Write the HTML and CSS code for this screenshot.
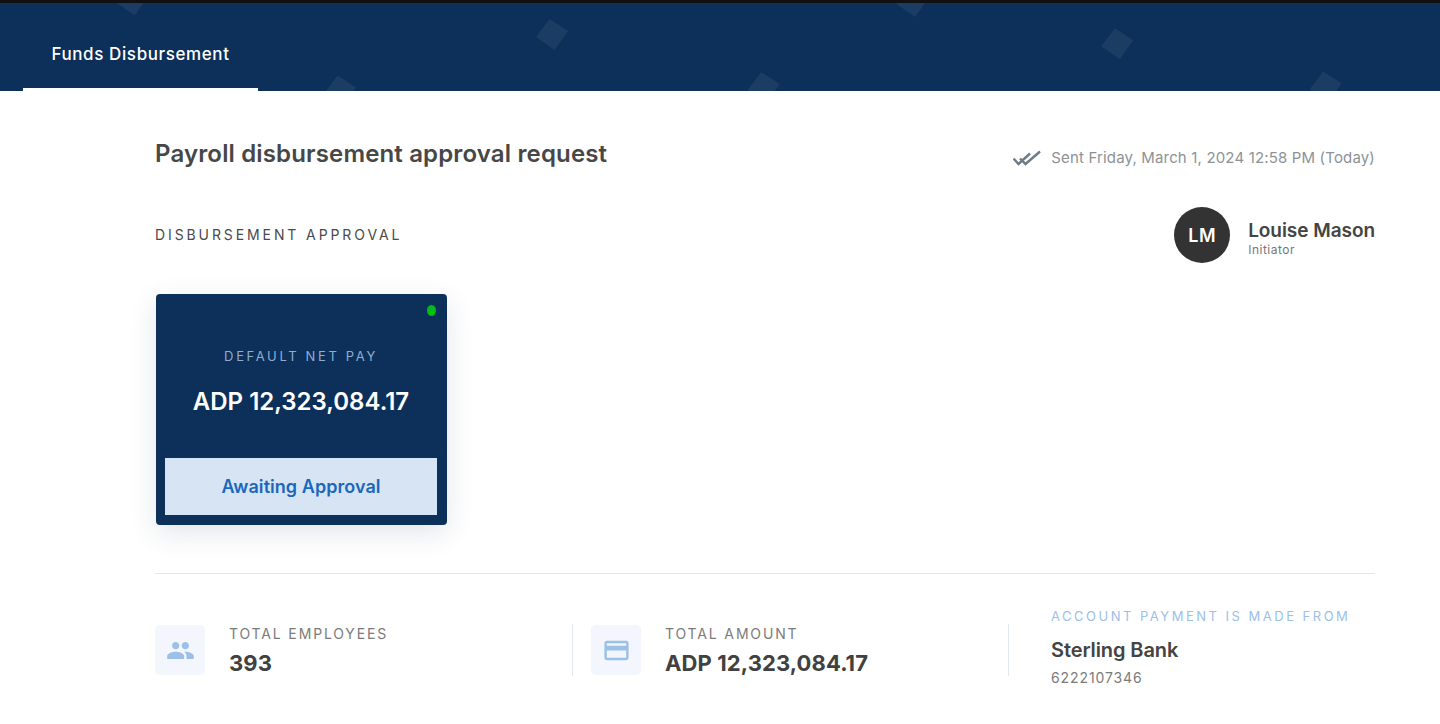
FILE: index.html
```html
<!DOCTYPE html>
<html lang="en">
<head>
<meta charset="utf-8">
<title>Funds Disbursement</title>
<link rel="stylesheet" href="styles.css">
</head>
<body>
<header class="banner">
  <svg class="confetti" width="1440" height="88" viewBox="0 0 1440 88" aria-hidden="true">
    <g fill="#1c3d63">
      <polygon points="129.600,-18.500 148,-6.500 134.600,12.500 116,-0.500"/>
      <polygon points="549.600,16 568,28 554.600,47 536,34"/>
      <polygon points="337.600,72.500 356,84.500 342.600,103.500 324,90.500"/>
      <polygon points="910.100,-17 928.500,-5 915.100,14 896.500,1"/>
      <polygon points="1114.900,25.300 1133.300,37.300 1119.900,56.300 1101.300,43.300"/>
      <polygon points="761.300,69 779.700,81 766.300,100 747.700,87"/>
      <polygon points="1323.200,68.500 1341.600,80.500 1328.200,99.500 1309.600,86.500"/>
    </g>
  </svg>
  <nav class="tabs"><a class="tab">Funds Disbursement</a></nav>
</header>
<main class="content">
  <div class="title-row">
    <h1 class="title">Payroll disbursement approval request</h1>
    <div class="sent">
      <svg class="sent-icon" width="28" height="16" viewBox="0 0 28 16" aria-hidden="true">
        <path d="M0.500 8.500 L5.500 14 L17 3.500 M7 8.500 L12.500 14 L27 1.500" fill="none" stroke="#6f7c85" stroke-width="2.400"/>
      </svg>
      <span>Sent Friday, March 1, 2024 12:58 PM (Today)</span>
    </div>
  </div>
  <div class="approval-row">
    <h2 class="section-label">DISBURSEMENT APPROVAL</h2>
    <div class="person">
      <div class="avatar">LM</div>
      <div class="person-text">
        <div class="person-name">Louise Mason</div>
        <div class="person-role">Initiator</div>
      </div>
    </div>
  </div>
  <section class="pay-card">
    <span class="status-dot"></span>
    <div class="pay-label">DEFAULT NET PAY</div>
    <div class="pay-amount">ADP 12,323,084.17</div>
    <div class="pay-status">Awaiting Approval</div>
  </section>
  <hr class="rule">
  <div class="stats">
    <div class="stat stat-first">
      <div class="stat-icon">
        <svg width="29" height="29" viewBox="0 0 24 24" aria-hidden="true"><path fill="#9cc0e7" d="M16 11c1.660 0 2.990-1.340 2.990-3S17.660 5 16 5s-3 1.340-3 3 1.340 3 3 3zm-8 0c1.660 0 2.990-1.340 2.990-3S9.660 5 8 5 5 6.340 5 8s1.340 3 3 3zm0 2c-2.330 0-7 1.170-7 3.500V19h14v-2.500c0-2.330-4.670-3.500-7-3.500zm8 0c-.290 0-.620.020-.970.050 1.160.840 1.970 1.970 1.970 3.450V19h6v-2.500c0-2.330-4.670-3.500-7-3.500z"/></svg>
      </div>
      <div>
        <div class="stat-label">TOTAL EMPLOYEES</div>
        <div class="stat-value">393</div>
      </div>
    </div>
    <div class="stat stat-second">
      <div class="stat-icon">
        <svg width="29" height="29" viewBox="0 0 24 24" aria-hidden="true"><path fill="#9cc0e7" d="M20 4H4c-1.110 0-1.990.890-1.990 2L2 18c0 1.110.890 2 2 2h16c1.110 0 2-.890 2-2V6c0-1.110-.890-2-2-2zm0 14H4v-6h16v6zm0-10H4V6h16v2z"/></svg>
      </div>
      <div>
        <div class="stat-label">TOTAL AMOUNT</div>
        <div class="stat-value">ADP 12,323,084.17</div>
      </div>
    </div>
    <div class="account">
      <div class="account-label">ACCOUNT PAYMENT IS MADE FROM</div>
      <div class="account-name">Sterling Bank</div>
      <div class="account-number">6222107346</div>
    </div>
  </div>
</main>
</body>
</html>
```
FILE: styles.css
```css
* { box-sizing: border-box; }
html, body { margin: 0; padding: 0; }
body {
  background: #fff;
  font-family: Inter, "Noto Sans", sans-serif;
  color: #3f3f3f;
  height: 724px;
  overflow: hidden;
}
.banner {
  position: relative;
  height: 91px;
  background: #0c3059;
  border-top: 3px solid #111;
  overflow: hidden;
}
.confetti { position: absolute; left: 0; top: 0; }
.tabs {
  position: relative;
  display: flex;
  height: 88px;
  padding-left: 23px;
}
.tab {
  display: flex;
  align-items: center;
  justify-content: center;
  width: 235px;
  height: 88px;
  padding-top: 16px;
  border-bottom: 3px solid #fff;
  color: #fff;
  font-size: 17px;
  letter-spacing: 0.6px;
  font-weight: 500;
}
.content { padding: 0 65px 0 155px; }
.title-row {
  display: flex;
  justify-content: space-between;
  align-items: flex-end;
  height: 78px;
}
.title {
  margin: 0;
  font-size: 24px;
  line-height: 30px;
  font-weight: 600;
  color: #474747;
  letter-spacing: 0.15px;
}
.sent {
  display: flex;
  align-items: center;
  gap: 10px;
  padding-bottom: 1px;
  font-size: 15px;
  letter-spacing: 0.16px;
  line-height: 20px;
  color: #8d9296;
}
.approval-row {
  display: flex;
  justify-content: space-between;
  align-items: flex-start;
  margin-top: 38px;
}
.section-label {
  margin: 18px 0 0;
  font-size: 14px;
  line-height: 20px;
  font-weight: 400;
  letter-spacing: 2.9px;
  color: #4a4a4a;
}
.person { display: flex; align-items: center; gap: 18px; }
.avatar {
  display: flex;
  align-items: center;
  justify-content: center;
  width: 56px;
  height: 56px;
  border-radius: 50%;
  background: #333;
  color: #fff;
  font-size: 18px;
  font-weight: 600;
  letter-spacing: 0.6px;
}
.person-text { margin-top: 5px; }
.person-name { font-size: 19px; letter-spacing: -0.05px; line-height: 24px; font-weight: 600; color: #444; }
.person-role { font-size: 12px; letter-spacing: 0.5px; line-height: 14px; color: #777; }
.pay-card {
  position: relative;
  display: flex;
  flex-direction: column;
  align-items: center;
  width: 291px;
  height: 231px;
  margin: 31px 0 0 1px;
  padding: 0 10px 10px 9px;
  background: #0c3059;
  border-radius: 4px;
  box-shadow: 0 8px 28px rgba(12, 48, 89, 0.12);
}
.status-dot {
  position: absolute;
  top: 11px;
  right: 11px;
  width: 9px;
  height: 11px;
  border-radius: 50%;
  background: #00bd13;
}
.pay-label {
  margin-top: 52px;
  font-size: 13px;
  line-height: 20px;
  letter-spacing: 2.65px;
  color: #8fadd0;
}
.pay-amount {
  margin-top: 21px;
  font-size: 24px;
  letter-spacing: 0;
  line-height: 30px;
  font-weight: 600;
  color: #fff;
}
.pay-status {
  display: flex;
  align-items: center;
  justify-content: center;
  width: 100%;
  height: 57px;
  margin-top: auto;
  background: #d6e4f4;
  color: #1a67bd;
  font-size: 18px;
  letter-spacing: 0.05px;
  font-weight: 600;
}
.rule {
  height: 1px;
  margin: 48px 0 0;
  border: 0;
  background: #e4e7ea;
}
.stats {
  display: flex;
  align-items: center;
  height: 104px;
  margin-top: 24px;
}
.stat { display: flex; align-items: center; gap: 24px; }
.stat-first { width: 417px; height: 52px; }
.stat-second {
  width: 436px;
  height: 52px;
  padding-left: 18px;
  border-left: 1px solid #e0eaf5;
}
.stat-icon {
  display: flex;
  align-items: center;
  justify-content: center;
  width: 50px;
  height: 50px;
  border-radius: 5px;
  background: #f3f6fc;
}
.stat-label {
  padding-top: 1px;
  font-size: 14px;
  line-height: 18px;
  letter-spacing: 1.85px;
  color: #7b7b7b;
}
.stat-value {
  margin-top: 6px;
  font-size: 22px;
  letter-spacing: 0.1px;
  line-height: 28px;
  font-weight: 700;
  color: #414141;
}
.account {
  height: 52px;
  padding-left: 42px;
  border-left: 1px solid #e0eaf5;
}
.account-label {
  margin-top: -17px;
  font-size: 13px;
  line-height: 18px;
  letter-spacing: 2.5px;
  color: #9cc0e7;
  white-space: nowrap;
}
.account-name {
  margin-top: 12px;
  font-size: 20px;
  letter-spacing: -0.1px;
  line-height: 26px;
  font-weight: 600;
  color: #444;
}
.account-number {
  margin-top: 5px;
  font-size: 14px;
  line-height: 20px;
  letter-spacing: 0.9px;
  color: #7b7b7b;
}
```
